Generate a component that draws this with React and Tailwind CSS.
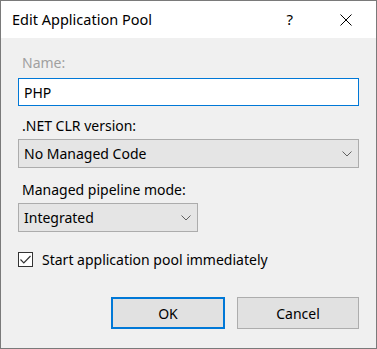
import React from "react";

function Chevron() {
  return (
    <svg width="10" height="6" viewBox="0 0 10 6" className="block">
      <path d="M0.5 0.5 L5 5 L9.5 0.5" fill="none" stroke="#606060" strokeWidth="1" />
    </svg>
  );
}

export default function App() {
  const font = { fontFamily: '"Noto Sans", "Open Sans", sans-serif' };
  return (
    <div className="w-[377px] h-[349px] border border-[#7a7a7a] flex flex-col bg-[#f0f0f0] text-[14px] text-black" style={font}>
      <div className="h-[37px] bg-white flex items-center pl-[11px] pr-[24px]">
        <span className="text-[14.5px] flex-1 leading-none">Edit Application Pool</span>
        <span className="text-[15px] leading-none mr-[47px]">?</span>
        <svg width="12" height="12" viewBox="0 0 12 12">
          <path d="M0.5 0.5 L11.5 11.5 M11.5 0.5 L0.5 11.5" stroke="#000" strokeWidth="1" />
        </svg>
      </div>
      <div className="flex-1 flex flex-col px-[17px] pt-[15px]">
        <div className="text-[#a0a0a0] leading-[20px] pl-[4px]">Name:</div>
        <div className="mt-[5px] h-[28px] border border-[#0078d7] bg-white flex items-center px-[5px]">PHP</div>
        <div className="mt-[10px] leading-[20px] pl-[4px]">.NET CLR version:</div>
        <div className="mt-[3px] h-[29px] border border-[#acacac] bg-[#e5e5e5] flex items-center pl-[5px] pr-[6px]">
          <span className="flex-1">No Managed Code</span>
          <Chevron />
        </div>
        <div className="mt-[12px] leading-[20px] pl-[4px]">Managed pipeline mode:</div>
        <div className="mt-[3px] w-[180px] h-[29px] border border-[#acacac] bg-[#e5e5e5] flex items-center pl-[5px] pr-[6px]">
          <span className="flex-1">Integrated</span>
          <Chevron />
        </div>
        <div className="mt-[17px] flex items-center">
          <div className="w-[15px] h-[15px] border border-[#333] bg-white flex items-center justify-center">
            <svg width="11" height="9" viewBox="0 0 11 9">
              <path d="M0.5 4.5 L3.8 7.8 L10.5 1" fill="none" stroke="#333" strokeWidth="1.2" />
            </svg>
          </div>
          <span className="ml-[9px]">Start application pool immediately</span>
        </div>
        <div className="mt-[27px] flex justify-end gap-[12px]">
          <div className="w-[114px] h-[32px] border-2 border-[#0078d7] bg-[#e1e1e1] flex items-center justify-center">OK</div>
          <div className="w-[122px] h-[32px] border border-[#adadad] bg-[#e1e1e1] flex items-center justify-center">Cancel</div>
        </div>
      </div>
    </div>
  );
}
